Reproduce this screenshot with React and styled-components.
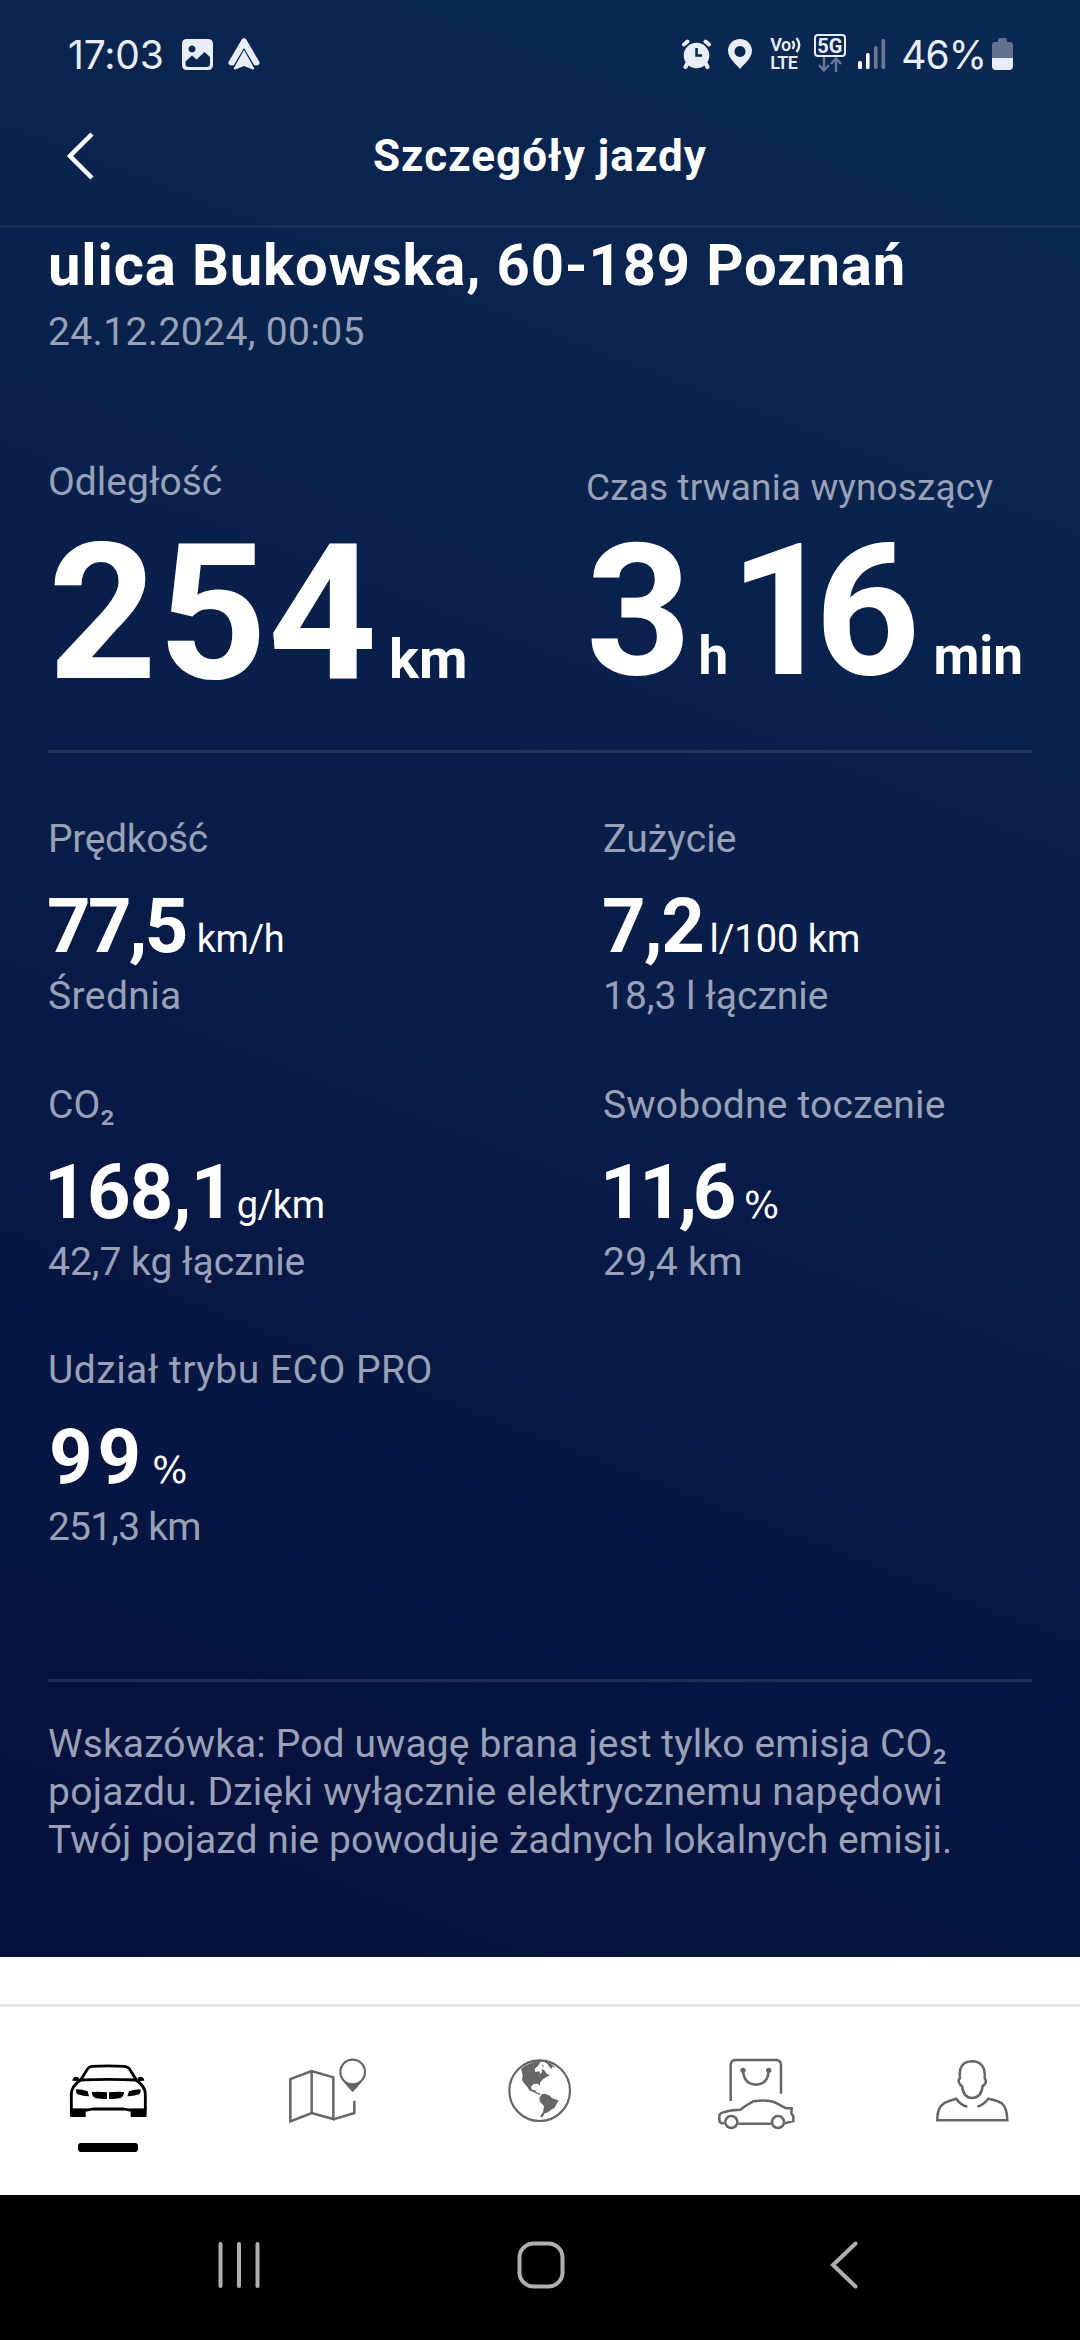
import React from "react";
import styled, { createGlobalStyle } from "styled-components";

// ls: letter spacing of label, value, unit, sub
const stats = [
  { label: "Prędkość", value: "77,5", unit: "km/h", sub: "Średnia", ls: [-0.35, -2.7, -0.4, 0.4], gap: 11, shift: -1 },
  { label: "Zużycie", value: "7,2", unit: "l/100 km", sub: "18,3 l łącznie", ls: [0.15, -1.5, 0, 0], gap: 6, shift: -1 },
  { label: "CO₂", value: "168,1", unit: "g/km", sub: "42,7 kg łącznie", ls: [0, -0.7, -0.4, 0], gap: 3, shift: -4 },
  { label: "Swobodne toczenie", value: "11,6", unit: "%", sub: "29,4 km", ls: [0.2, -4.4, 0, 0.4], gap: 12, shift: -3 },
  { label: "Udział trybu ECO PRO", value: "99", unit: "%", sub: "251,3 km", ls: [0.5, 5, 0, -0.8], gap: 6, shift: 1 },
];

const note = [
  { text: "Wskazówka: Pod uwagę brana jest tylko emisja CO₂", ls: 0.12 },
  { text: "pojazdu. Dzięki wyłącznie elektrycznemu napędowi", ls: 0.25 },
  { text: "Twój pojazd nie powoduje żadnych lokalnych emisji.", ls: 0.1 },
];

const CarIcon = () => (
  <TabSvg viewBox="54 72 300 240">
    <g fill="none" stroke="#000" strokeWidth="8.500" strokeLinejoin="round">
      <path d="M122 150 L143 116 Q147 110 156 109 Q205 106 254 109 Q263 110 268 116 L289 150" />
      <path d="M120 150 Q205 146 290 150" />
      <path d="M122 150 Q95 168 94 192 V240" />
      <path d="M288 150 Q315 168 316 192 V240" />
      <path d="M94 240 H142 Q150 239 158 237 H252 Q260 239 268 240 H316" />
    </g>
    <path d="M90 236 H137 V261 H94 Q90 261 90 257Z M320 236 H272 V261 H316 Q320 261 320 257Z" />
    <path d="M97 152 Q98 142 107 140 Q116 140 118 146 L114 153Z M313 152 Q312 142 303 140 Q294 140 292 146 L296 153Z" />
    <path d="M108 178 Q128 178 143 184 L147 199 Q124 197 111 192 Q107 187 108 178Z M302 178 Q282 178 267 184 L262 199 Q286 197 299 192 Q303 187 302 178Z" />
    <path d="M155 186 Q178 184 201 187 V207 Q182 208 166 204 Q156 199 155 186Z M252 186 Q230 184 207 187 V207 Q226 208 242 204 Q252 199 252 186Z" />
  </TabSvg>
);

const MapIcon = () => (
  <TabSvg viewBox="702 72 300 240">
    <g fill="none" stroke="#666" strokeWidth="7.500">
      <path d="M751 274 V147 L815 123 L880 142 V267 L815 249Z" />
      <path d="M815 123 V249" />
      <path d="M880 268 L943 249 V212" />
      <circle cx="938" cy="126" r="37" strokeWidth="6.500" />
    </g>
    <path fill="#666" d="M903 144 Q918 161 938 161 Q958 161 973 144 Q965 158 938 187 Q911 158 903 144Z" />
  </TabSvg>
);

const GlobeIcon = () => (
  <TabSvg viewBox="150 72 300 240">
    <circle cx="299" cy="182" r="91" fill="none" stroke="#666" strokeWidth="6.500" />
    <path
      fill="#666"
      d="M243 117 Q268 94 306 92 L299 100 L294 108 L284 116 L286 126 L297 124 L302 133 L306 126 L304 117 L313 121 L321 132 L330 135 L318 142 L309 148 L300 158 L300 168 L294 161 L281 162 L273 170 L276 179 L286 181 L288 186 L301 191 L300 195 L284 188 L268 181 L262 171 L251 158 L246 150 L248 134Z"
    />
    <path fill="#666" d="M306 92 Q330 95 347 114 L336 110 L334 118 L328 111 L322 101Z M305 104 L312 108 L308 112Z" />
    <path
      fill="#666"
      d="M305 193 L314 191 L330 197 L336 205 L356 211 L350 222 L343 234 L332 240 L322 248 L315 249 L307 262 L300 260 L309 246 L312 229 L299 214 L298 204Z"
    />
  </TabSvg>
);

const ShopIcon = () => (
  <TabSvg viewBox="798 72 300 240">
    <g fill="none" stroke="#666" strokeWidth="7.500">
      <path d="M872 213 V104 Q873 91 886 90 H1009 Q1022 91 1023 104 V191" />
      <path d="M909 122 Q912 163 948 164 Q984 163 986 122" />
      <path d="M853 280 H845 Q838 278 838 268 V259 Q838 250 847 248 Q872 239 901 239 Q924 222 940 214 Q988 207 1012 221 L1038 235 H1055 L1054 250 L1060 259 V273 L1034 280 M895 281 H993" />
      <circle cx="874" cy="276" r="18" />
      <circle cx="1014" cy="276" r="18" />
    </g>
    <circle cx="909" cy="121" r="8" fill="#666" />
    <circle cx="986" cy="121" r="8" fill="#666" />
  </TabSvg>
);

const PersonIcon = () => (
  <TabSvg viewBox="66 72 300 240">
    <g fill="none" stroke="#666" strokeWidth="7.500">
      <path d="M180 145 Q174 95 216 94 Q258 95 254 145 Q260 152 256 160 Q253 166 248 168 Q244 203 216 204 Q190 203 186 168 Q180 166 177 158 Q174 150 180 145Z" />
      <path d="M202 230 Q183 226 169 206 Q142 213 132 220 Q111 232 112 271 H322 Q321 232 305 220 Q294 212 265 206 Q250 225 232 230" />
    </g>
  </TabSvg>
);

const tabs = [CarIcon, MapIcon, GlobeIcon, ShopIcon, PersonIcon];

const StatusBar = () => (
  <Status>
    <Clock>17:03</Clock>
    <svg width="31" height="31" viewBox="0 0 31 31">
      <path
        fill="#e9edf7"
        fillRule="evenodd"
        d="M5 0H26Q31 0 31 5V26Q31 31 26 31H5Q0 31 0 26V5Q0 0 5 0Z M10 6.500a3.500 3.500 0 1 0 .01 0Z M3.500 22.500L10 16.500L14.500 20.500L22.500 13L28 18V24.500Q28 28 24.500 28H6.500Q3.500 28 3.500 25Z"
      />
    </svg>
    <AutoIcon width="32" height="32" viewBox="0 0 32 32">
      <path
        fill="#e9edf7"
        d="M16 0Q17.500 0 18.300 1.500L31.500 24Q32 27.500 28 27.500L26 27L16 10L6 27L4 27.500Q0 27.500 .5 24L13.700 1.500Q14.500 0 16 0Z"
      />
      <path fill="#e9edf7" d="M16 12L26.300 30.500Q26 32 24 31.300L16 28L8 31.300Q6 32 5.700 30.500Z" />
    </AutoIcon>
    <Spacer />
    <StatusIcons>
      <svg width="29" height="30" viewBox="0 0 29 30">
        <circle cx="14.500" cy="16.500" r="12.800" fill="#e9edf7" />
        <g stroke="#e9edf7" strokeWidth="4" strokeLinecap="round">
          <path d="M2 5.500L5.500 2.500M27 5.500L23.500 2.500M5 25L3.500 28M24 25L25.500 28" />
        </g>
        <path d="M14.500 9V16.500H20" fill="none" stroke="#0a2650" strokeWidth="2.500" />
      </svg>
      <PinIcon width="24" height="30" viewBox="0 0 24 30">
        <path
          fill="#e9edf7"
          fillRule="evenodd"
          d="M12 0C5 0 0 5.200 0 12C0 19 9 26 12 30C15 26 24 19 24 12C24 5.200 19 0 12 0ZM12 7a5.500 5.500 0 1 1-.01 0Z"
        />
      </PinIcon>
      <VoLte>
        <VoRow>
          Vo
          <svg width="11" height="16" viewBox="0 0 11 16">
            <path d="M1.500 4Q4.500 8 1.500 12M5.500 1Q11 8 5.500 15" fill="none" stroke="#e9edf7" strokeWidth="2.400" />
          </svg>
        </VoRow>
        <LteRow>LTE</LteRow>
      </VoLte>
      <FiveG>
        <FiveGBox>5G</FiveGBox>
        <svg width="24" height="15" viewBox="0 0 24 15">
          <path d="M6 0V13M1 8L6 13.500L11 8M18 15V2M13 7L18 1.500L23 7" fill="none" stroke="#6a7897" strokeWidth="2.400" />
        </svg>
      </FiveG>
      <svg width="28" height="30" viewBox="0 0 28 30">
        <rect x="0" y="22" width="4" height="8" rx="1.500" fill="#fff" />
        <rect x="8" y="14" width="3.600" height="16" rx="1.500" fill="#fff" />
        <rect x="16" y="7" width="3.600" height="23" rx="1.500" fill="#6a7897" />
        <rect x="23.500" y="0" width="3.600" height="30" rx="1.500" fill="#6a7897" />
      </svg>
      <Percent>46%</Percent>
      <svg width="21" height="32" viewBox="0 0 21 32">
        <path fill="#63718f" d="M6 2Q6 0 8 0H13Q15 0 15 2V4H18Q21 4 21 7V20H0V7Q0 4 3 4H6Z" />
        <path fill="#e9edf7" d="M0 20H21V28Q21 32 17 32H4Q0 32 0 28Z" />
      </svg>
    </StatusIcons>
  </Status>
);

const Stat = ({ item }) => (
  <StatBox>
    <Label $ls={item.ls[0]}>{item.label}</Label>
    <ValueRow $gap={item.gap} $shift={item.shift}>
      <Value $ls={item.ls[1]}>{item.value}</Value>
      <Unit $ls={item.ls[2]} $wide={item.unit === "%"}>
        {item.unit}
      </Unit>
    </ValueRow>
    <Label $ls={item.ls[3]}>{item.sub}</Label>
  </StatBox>
);

const App = () => {
  return (
    <Screen>
      <GlobalStyle />
      <Trip>
        <StatusBar />
        <Header>
          <svg width="28" height="48" viewBox="0 0 28 48">
            <path d="M25 2L3 24L25 46" fill="none" stroke="#fff" strokeWidth="4.500" />
          </svg>
          <Title>Szczegóły jazdy</Title>
        </Header>
        <Content>
          <Address>ulica Bukowska, 60-189 Poznań</Address>
          <DateText $ls={0.38}>24.12.2024, 00:05</DateText>
          <Hero>
            <HeroBox>
              <Label $ls={0}>Odległość</Label>
              <Big>
                <BigNumber $ls={1}>254</BigNumber>
                <BigUnit $left={11}>km</BigUnit>
              </Big>
            </HeroBox>
            <HeroBox $small>
              <SmallLabel $ls={0.15}>Czas trwania wynoszący</SmallLabel>
              <Big $small>
                <BigNumber $small>3</BigNumber>
                <BigUnit $small $left={7}>
                  h
                </BigUnit>
                <BigNumber $small $ls={-20} $left={1}>
                  16
                </BigNumber>
                <BigUnit $small $left={33}>
                  min
                </BigUnit>
              </Big>
            </HeroBox>
          </Hero>
          <Divider />
          <StatGrid>
            {stats.map((item) => (
              <Stat key={item.label} item={item} />
            ))}
          </StatGrid>
          <Divider />
          <Note>
            {note.map((line) => (
              <Label key={line.text} $ls={line.ls}>
                {line.text}
              </Label>
            ))}
          </Note>
        </Content>
      </Trip>
      <TabBar>
        {tabs.map((Icon, i) => (
          <Tab key={i}>
            <Icon />
            {i === 0 && <Marker />}
          </Tab>
        ))}
      </TabBar>
      <SystemBar>
        <SystemKey>
          <svg width="42" height="48" viewBox="0 0 42 48">
            <path d="M2.500 3V45M21 3V45M39.500 3V45" stroke="#b0b0b0" strokeWidth="4" strokeLinecap="round" />
          </svg>
        </SystemKey>
        <SystemKey>
          <svg width="48" height="48" viewBox="0 0 48 48">
            <rect x="2.500" y="2.500" width="43" height="43" rx="14" fill="none" stroke="#b0b0b0" strokeWidth="4" />
          </svg>
        </SystemKey>
        <SystemKey>
          <svg width="28" height="48" viewBox="0 0 28 48">
            <path d="M25.500 2.500L3 24L25.500 45.500" fill="none" stroke="#b0b0b0" strokeWidth="4" strokeLinecap="round" />
          </svg>
        </SystemKey>
      </SystemBar>
    </Screen>
  );
};

export default App;

const GlobalStyle = createGlobalStyle`
  * {
    box-sizing: border-box;
  }
  body {
    margin: 0;
    background: #fff;
    font-family: Roboto, "Noto Sans", sans-serif;
  }
  svg {
    display: block;
    flex-shrink: 0;
  }
`;

const Screen = styled.div`
  width: 1080px;
  height: 2340px;
  display: flex;
  flex-direction: column;
  overflow: hidden;
`;

const Trip = styled.div`
  height: 1957px;
  flex-shrink: 0;
  background: linear-gradient(201deg, #0a2952 0%, #081d48 50%, #050f3c 100%);
`;

const Status = styled.div`
  height: 96px;
  padding: 12px 67px 0 68px;
  display: flex;
  align-items: center;
  color: #e9edf7;
`;

const Clock = styled.div`
  width: 114px;
  font-family: Inter, Roboto, sans-serif;
  font-size: 39px;
  letter-spacing: -0.2px;
`;

const AutoIcon = styled.svg`
  margin-left: 15px;
`;

const Spacer = styled.div`
  flex: 1;
`;

const StatusIcons = styled.div`
  display: flex;
  align-items: center;
`;

const PinIcon = styled.svg`
  margin-left: 17px;
`;

const VoLte = styled.div`
  width: 33px;
  margin-left: 18px;
  font-size: 18px;
  font-weight: 600;
  line-height: 18px;
`;

const VoRow = styled.div`
  display: flex;
  align-items: center;
  letter-spacing: -0.5px;
`;

const LteRow = styled.div`
  letter-spacing: -0.6px;
`;

const FiveG = styled.div`
  width: 33px;
  margin: -3px 12px 0 10px;
  display: flex;
  flex-direction: column;
  align-items: center;
`;

const FiveGBox = styled.div`
  width: 32px;
  height: 23px;
  border: 2px solid #e9edf7;
  border-radius: 4px;
  font-size: 20px;
  font-weight: 700;
  line-height: 20px;
  text-align: center;
`;

const Percent = styled.div`
  margin: 0 6px 0 15px;
  font-family: Inter, Roboto, sans-serif;
  font-size: 39px;
  letter-spacing: -1px;
`;

const Header = styled.div`
  height: 132px;
  padding: 0 67px 9px;
  display: grid;
  grid-template-columns: 28px 1fr 28px;
  align-items: center;
  border-bottom: 3px solid rgba(255, 255, 255, 0.06);
`;

const Title = styled.div`
  text-align: center;
  color: #fff;
  font-size: 44px;
  font-weight: 700;
  line-height: 56px;
  letter-spacing: 1.05px;
  white-space: nowrap;
`;

const Content = styled.div`
  padding: 2px 48px 0;
`;

const Address = styled.div`
  color: #fff;
  font-size: 58px;
  font-weight: 700;
  line-height: 70px;
  letter-spacing: 0.84px;
  white-space: nowrap;
`;

const Label = styled.div`
  color: #99a1b9;
  font-size: 39px;
  line-height: 48px;
  letter-spacing: ${(props) => props.$ls}px;
  white-space: nowrap;
`;

const DateText = styled(Label)`
  margin-top: 8px;
`;

const SmallLabel = styled(Label)`
  font-size: 37px;
`;

const Hero = styled.div`
  height: 292px;
  margin-top: 102px;
  display: grid;
  grid-template-columns: 538px 1fr;
`;

const HeroBox = styled.div`
  padding-top: ${(props) => (props.$small ? 6 : 0)}px;
`;

const Big = styled.div`
  height: ${(props) => (props.$small ? 184 : 190)}px;
  margin-top: ${(props) => (props.$small ? 7 : 12)}px;
  display: flex;
  align-items: baseline;
  color: #fff;
  font-weight: 700;
`;

const BigNumber = styled.div`
  margin-left: ${(props) => props.$left || 0}px;
  font-size: ${(props) => (props.$small ? 184 : 190)}px;
  line-height: ${(props) => (props.$small ? 184 : 190)}px;
  letter-spacing: ${(props) => props.$ls || 0}px;
`;

const BigUnit = styled.div`
  margin-left: ${(props) => props.$left}px;
  font-size: ${(props) => (props.$small ? 53 : 56)}px;
`;

const Divider = styled.div`
  height: 3px;
  background: rgba(255, 255, 255, 0.1);
`;

const StatGrid = styled.div`
  height: 926px;
  padding-top: 62px;
  display: grid;
  grid-template-columns: 555px 1fr;
  grid-auto-rows: 265.5px;
`;

const StatBox = styled.div`
  display: flex;
  flex-direction: column;
`;

const ValueRow = styled.div`
  height: 80px;
  margin: 23px 0 6px ${(props) => props.$shift}px;
  display: flex;
  align-items: baseline;
  gap: ${(props) => props.$gap}px;
  color: #fff;
  white-space: nowrap;
`;

const Value = styled.div`
  font-size: 76px;
  font-weight: 700;
  line-height: 80px;
  letter-spacing: ${(props) => props.$ls}px;
`;

const Unit = styled.div`
  font-family: ${(props) => (props.$wide ? '"DejaVu Sans", sans-serif' : "inherit")};
  font-size: ${(props) => (props.$wide ? 37 : 38)}px;
  letter-spacing: ${(props) => props.$ls}px;
`;

const Note = styled.div`
  padding-top: 38px;
`;

const TabBar = styled.div`
  height: 191px;
  margin-top: 47px;
  flex-shrink: 0;
  display: flex;
  border-top: 3px solid #e6e6e6;
  background: #fff;
`;

const Tab = styled.div`
  width: 216px;
  padding-top: 47px;
  display: flex;
  flex-direction: column;
  align-items: center;
`;

const TabSvg = styled.svg`
  width: 100px;
  height: 80px;
`;

const Marker = styled.div`
  width: 60px;
  height: 9px;
  margin-top: 9px;
  border-radius: 3px;
  background: #000;
`;

const SystemBar = styled.div`
  flex: 1;
  padding: 0 85px 5px 88px;
  display: flex;
  align-items: center;
  background: #000;
`;

const SystemKey = styled.div`
  flex: 1;
  display: flex;
  justify-content: center;
`;
